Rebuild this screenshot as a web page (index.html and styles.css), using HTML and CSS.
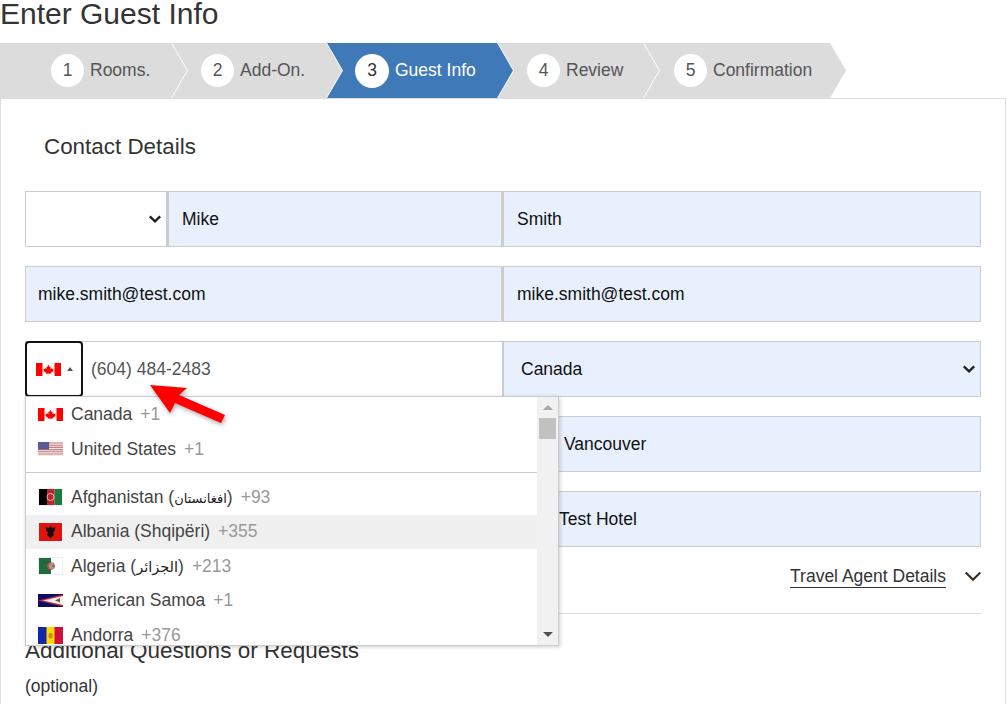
FILE: index.html
```html
<!DOCTYPE html>
<html lang="en">
<head>
<meta charset="utf-8">
<title>Enter Guest Info</title>
<link rel="stylesheet" href="styles.css">
</head>
<body>
<h1 class="page-title">Enter Guest Info</h1>
<ol class="steps">
  <li class="step step-first"><span class="step-num">1</span><span>Rooms.</span></li>
  <li class="step step-2"><span class="step-num">2</span><span>Add-On.</span></li>
  <li class="step step-3 step-active"><span class="step-num">3</span><span>Guest Info</span></li>
  <li class="step step-4"><span class="step-num">4</span><span>Review</span></li>
  <li class="step step-5"><span class="step-num">5</span><span>Confirmation</span></li>
</ol>
<main class="panel">
  <h2 class="section-title">Contact Details</h2>
  <form class="form">
    <div class="row row-name">
      <select class="field select-plain" aria-label="Title"><option></option></select>
      <input class="field filled" value="Mike" aria-label="First name">
      <input class="field filled" value="Smith" aria-label="Last name">
    </div>
    <div class="row row-half">
      <input class="field filled" value="mike.smith@test.com" aria-label="Email">
      <input class="field filled" value="mike.smith@test.com" aria-label="Confirm email">
    </div>
    <div class="row row-half">
      <div class="phone">
        <div class="flag-btn">
          <svg class="flag-svg" width="25" height="13" viewBox="0 0 25 13"><use href="#ca"/></svg>
          <span class="flag-caret"></span>
        </div>
        <input class="phone-input" value="(604) 484-2483" aria-label="Phone">
      </div>
      <select class="field filled select-country" aria-label="Country"><option>Canada</option></select>
    </div>
    <div class="row row-city">
      <input class="field filled" aria-label="Address">
      <input class="field filled" value="Vancouver" aria-label="City">
    </div>
    <div class="row row-hotel">
      <input class="field filled" aria-label="Postal code">
      <input class="field filled" value="Test Hotel" aria-label="Hotel">
    </div>
    <div class="agent">
      <a class="agent-link">Travel Agent Details</a>
      <svg class="agent-chevron" width="16" height="11" viewBox="0 0 16 11"><path d="M.7 1.500l7.300 7.300 7.300-7.300" fill="none" stroke="#3a2a1c" stroke-width="2.200"/></svg>
    </div>
  </form>
  <h2 class="questions-title">Additional Questions or Requests</h2>
  <p class="optional">(optional)</p>

  <div class="dropdown">
    <ul class="country-list">
      <li class="country"><svg class="flag-svg" width="25" height="13" viewBox="0 0 25 13"><use href="#ca"/></svg><span>Canada</span><span class="dial">+1</span></li>
      <li class="country"><svg class="flag-svg" width="25" height="14" viewBox="0 0 25 14"><rect width="25" height="14" fill="#f2e6e6"/><path d="M0 1h25M0 3.200h25M0 5.400h25M0 7.600h25M0 9.800h25M0 12h25" stroke="#c98080" stroke-width="1.100"/><rect width="11" height="7.500" fill="#5a5a94"/></svg><span>United States</span><span class="dial">+1</span></li>
      <li class="country-divider"></li>
      <li class="country"><svg class="flag-svg" width="25" height="18" viewBox="0 0 25 18"><rect width="25" height="18" fill="#f4f4f4"/><rect x="1" y="1" width="8" height="16" fill="#000"/><rect x="9" y="1" width="7.500" height="16" fill="#c8202c"/><rect x="16.500" y="1" width="7.500" height="16" fill="#1c7a3c"/><circle cx="12.500" cy="9" r="3.500" fill="none" stroke="#e8b8b8"/></svg><span>Afghanistan (<span class="arabic-long">افغانستان</span>)</span><span class="dial">+93</span></li>
      <li class="country country-hover"><svg class="flag-svg" width="25" height="20" viewBox="0 0 25 20"><rect width="25" height="20" fill="#f4f4f4"/><rect x="1" y="1" width="23" height="18" fill="#e0140f"/><path d="M12.500 4l2 2 3-1-1 4-1.500 1.500 1 2.500-3.500 3-3.500-3 1-2.500L8.500 9l-1-4 3 1z" fill="#1b0a0a"/></svg><span>Albania (Shqipëri)</span><span class="dial">+355</span></li>
      <li class="country"><svg class="flag-svg" width="25" height="18" viewBox="0 0 25 18"><rect width="25" height="18" fill="#eee"/><rect x="1" y="1" width="12" height="16" fill="#1f6b3a"/><rect x="13" y="1" width="11" height="16" fill="#fff"/><circle cx="13" cy="9" r="3.800" fill="#e0404a"/><circle cx="14" cy="9" r="3" fill="#8aa890"/><circle cx="15.500" cy="9" r="1.300" fill="#e0404a"/></svg><span>Algeria (<span class="arabic-short">الجزائر</span>)</span><span class="dial">+213</span></li>
      <li class="country"><svg class="flag-svg" width="25" height="13" viewBox="0 0 25 13"><rect width="25" height="13" fill="#0a0f60"/><path d="M25 .500v12L0 6.500z" fill="#d8283a"/><path d="M25 2v9L5 6.500z" fill="#f2f2f2"/><path d="M17 6.500l5-2.500v4.500z" fill="#7a5a30"/></svg><span>American Samoa</span><span class="dial">+1</span></li>
      <li class="country"><svg class="flag-svg" width="25" height="17" viewBox="0 0 25 17"><rect width="25" height="17" fill="#ffd800"/><rect width="8.500" height="17" fill="#1226a8"/><rect x="16.500" width="8.500" height="17" fill="#cf0f3c"/><rect x="10.500" y="6" width="4" height="5.500" rx="1.500" fill="#c88a20"/></svg><span>Andorra</span><span class="dial">+376</span></li>
    </ul>
    <div class="scrollbar">
      <span class="scroll-up"></span>
      <span class="scroll-thumb"></span>
      <span class="scroll-down"></span>
    </div>
  </div>
</main>

<svg class="red-arrow" width="90" height="45" viewBox="0 0 90 45">
  <path d="M4 2l37 3-8 7 46 20-4 8-46-20-5 10z" fill="#f00"/>
</svg>

<svg class="flag-defs" width="0" height="0">
  <defs>
    <g id="ca">
      <rect width="25" height="13" fill="#fff"/>
      <rect width="6.500" height="13" fill="#f00"/>
      <rect x="18.500" width="6.500" height="13" fill="#f00"/>
      <path d="M12.500 1.800l1.200 2.300 1-.5-.4 2.400 1.300-1 .4 1 1.600-.2-.5 1.500.6.400-2.700 2-.3 1-2.100-.3v1.400h-.2V10.400l-2.100.3-.3-1-2.700-2 .6-.4-.5-1.500 1.600.2.400-1 1.300 1-.4-2.400 1 .5z" fill="#f00"/>
    </g>
  </defs>
</svg>
</body>
</html>
```
FILE: styles.css
```css
* { box-sizing: border-box; }

html, body {
  margin: 0;
  height: 704px;
  overflow: hidden;
  background: #fff;
}

body {
  position: relative;
  font-family: "Liberation Sans", "DejaVu Sans", Arial, sans-serif;
  font-size: 17.5px;
  color: #333;
}

.page-title {
  margin: 0;
  height: 43px;
  font-size: 30px;
  font-weight: 400;
  line-height: 28px;
}

.steps {
  display: flex;
  margin: 0;
  padding: 0;
  list-style: none;
  height: 55px;
}

.step {
  display: flex;
  align-items: center;
  gap: 6px;
  height: 55px;
  margin-left: -15px;
  padding-left: 29px;
  background: #dcdcdc;
  color: #555;
  clip-path: polygon(0 0, calc(100% - 16px) 0, 100% 50%, calc(100% - 16px) 100%, 0 100%, 16px 50%);
}

.step-first {
  margin-left: 0;
  width: 187px;
  padding-left: 51px;
  clip-path: polygon(0 0, calc(100% - 16px) 0, 100% 50%, calc(100% - 16px) 100%, 0 100%);
}

.step-2 { width: 170px; }
.step-3 { width: 186px; padding-left: 28px; }
.step-4 { width: 161px; }
.step-5 { width: 202px; padding-left: 30px; }

.step-active {
  background: #3f79b7;
  color: #fff;
}

.step-num {
  display: flex;
  align-items: center;
  justify-content: center;
  width: 33px;
  height: 33px;
  border-radius: 50%;
  background: #fff;
  color: #555;
}

.step-active .step-num {
  width: 34px;
  height: 34px;
  color: #333;
}

.panel {
  position: relative;
  width: 1006px;
  height: 700px;
  padding: 0 24px;
  border: 1px solid #ddd;
  border-bottom: 0;
}

.section-title {
  margin: 0;
  padding: 34px 0 0 19px;
  height: 92px;
  font-size: 22.4px;
  font-weight: 400;
  line-height: 28px;
}

.form {
  display: flex;
  flex-direction: column;
  gap: 19px;
  width: 956px;
}

.row {
  display: grid;
  height: 56px;
}

.row-name { grid-template-columns: 142px 335px 479px; }
.row-half { grid-template-columns: 477px 479px; }
.row-city { grid-template-columns: 525px 431px; }
.row-hotel { grid-template-columns: 520px 436px; }

.field {
  width: 100%;
  height: 100%;
  margin: 0;
  padding: 0 12px 0 13px;
  border: 1px solid #ccc;
  border-left-width: 2px;
  border-radius: 0;
  outline: 0;
  font: 17.5px "Liberation Sans", "DejaVu Sans", Arial, sans-serif;
  color: #111;
  background-color: #fff;
}

.row > .field:first-child {
  padding-left: 12px;
  border-left-width: 1px;
}

.filled { background-color: #e8f0fe; }

.row-city .field + .field,
.row-hotel .field + .field { padding-left: 12px; }

.select-plain,
.select-country {
  appearance: none;
  background-repeat: no-repeat;
  background-image: url("data:image/svg+xml,%3Csvg xmlns='http://www.w3.org/2000/svg' width='12' height='8' viewBox='0 0 12 8'%3E%3Cpath d='M.8 1.300l5.200 5 5.200-5' fill='none' stroke='%23222' stroke-width='2.400'/%3E%3C/svg%3E");
}

.select-plain { background-position: right 5px center; }

.select-country {
  padding-left: 17px;
  background-position: right 5px center;
}

.phone {
  display: flex;
  height: 100%;
  border: 1px solid #ccc;
  border-right: 0;
}

.flag-btn {
  display: flex;
  align-items: center;
  gap: 6px;
  flex: none;
  width: 58px;
  height: 56px;
  margin: -1px 0 -1px -1px;
  padding-left: 9px;
  border: 2px solid #111;
  border-radius: 4px;
  background: #fff;
}

.flag-caret {
  width: 0;
  height: 0;
  border-left: 3px solid transparent;
  border-right: 3px solid transparent;
  border-bottom: 4px solid #555;
}

.flag-svg { flex: none; display: block; }

.flag-defs { position: absolute; }

.phone-input {
  flex: 1;
  min-width: 0;
  padding: 0 8px;
  border: 0;
  outline: 0;
  font: 17.5px "Liberation Sans", "DejaVu Sans", Arial, sans-serif;
  color: #555;
  background: #fff;
}

.agent {
  display: flex;
  justify-content: flex-end;
  align-items: flex-start;
  gap: 19px;
  height: 67px;
  margin-top: -19px;
  padding-top: 19px;
  border-bottom: 1px solid #ddd;
}

.agent-link {
  padding-bottom: 1px;
  border-bottom: 1px solid #333;
  line-height: 20px;
}

.agent-chevron { margin-top: 5px; }

.questions-title {
  margin: 23px 0 0;
  font-size: 22.5px;
  font-weight: 400;
  line-height: 28px;
}

.optional {
  margin: 11px 0 0;
  font-size: 17.5px;
  line-height: 20px;
}

.dropdown {
  position: absolute;
  left: 24px;
  top: 297px;
  display: flex;
  width: 534px;
  height: 250px;
  background: #fff;
  border: 1px solid #ccc;
  box-shadow: 1px 1px 4px rgba(0, 0, 0, .2);
  overflow: hidden;
}

.country-list {
  flex: 1;
  margin: 0;
  padding: .5px 0 0;
  list-style: none;
  overflow: hidden;
}

.country {
  display: flex;
  align-items: center;
  height: 34.5px;
  padding-left: 12px;
  color: #444;
}

.country .flag-svg { margin-right: 8px; }

.country-hover { background: #f0f0f0; }

.arabic-long { font-size: 13px; color: #222; }
.arabic-short { font-size: 14.5px; color: #222; }

.dial {
  margin-left: 8px;
  color: #999;
}

.country-divider {
  height: 1px;
  margin: 5.5px 0 7px;
  background: #ccc;
}

.scrollbar {
  position: relative;
  flex: none;
  width: 21px;
  background: #f1f1f1;
}

.scroll-up, .scroll-down {
  position: absolute;
  left: 6px;
  width: 0;
  height: 0;
  border-left: 5px solid transparent;
  border-right: 5px solid transparent;
}

.scroll-up { top: 8px; border-bottom: 5px solid #a8a8a8; }
.scroll-down { bottom: 8px; border-top: 5px solid #505050; }

.scroll-thumb {
  position: absolute;
  left: 2px;
  top: 21px;
  width: 17px;
  height: 21px;
  background: #c1c1c1;
}

.red-arrow {
  position: absolute;
  left: 146px;
  top: 383px;
  filter: drop-shadow(1px 2px 2px rgba(0, 0, 0, .35));
}
```
